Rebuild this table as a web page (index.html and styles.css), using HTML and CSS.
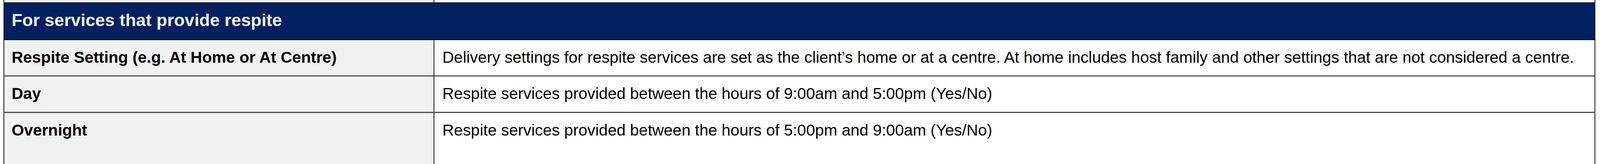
FILE: index.html
```html
<!DOCTYPE html>
<html lang="en">
<head>
<meta charset="utf-8">
<title>Respite services</title>
<link rel="stylesheet" href="styles.css">
</head>
<body>
<table class="grid">
  <colgroup>
    <col class="col-label">
    <col class="col-desc">
  </colgroup>
  <tbody>
    <tr class="stub">
      <td class="label"></td>
      <td class="desc"></td>
    </tr>
    <tr class="section">
      <td colspan="2">For services that provide respite</td>
    </tr>
    <tr class="row">
      <td class="label">Respite Setting (e.g. At Home or At Centre)</td>
      <td class="desc">Delivery settings for respite services are set as the client’s home or at a centre. At home includes host family and other settings that are not considered a centre.</td>
    </tr>
    <tr class="row">
      <td class="label">Day</td>
      <td class="desc">Respite services provided between the hours of 9:00am and 5:00pm (Yes/No)</td>
    </tr>
    <tr class="row row-last">
      <td class="label">Overnight</td>
      <td class="desc">Respite services provided between the hours of 5:00pm and 9:00am (Yes/No)</td>
    </tr>
  </tbody>
</table>
</body>
</html>
```

FILE: styles.css
```css
/* Sizes are expressed in vw so the sheet keeps the same proportions
   at any window width (1vw = 45.72px at the 4572px design width). */
html, body {
  margin: 0;
  padding: 0;
  background: #ffffff;
  overflow: hidden;
}

body {
  font-family: "Liberation Sans", Arial, sans-serif;
  color: #000000;
}

.grid {
  border-collapse: collapse;
  table-layout: fixed;
  margin-left: 0.2187vw;
  width: 99.49vw;
}

.col-label {
  width: 26.88vw;
}

.grid td {
  border: 2px solid #111111;
  padding: 0;
  text-align: left;
  vertical-align: top;
  overflow: hidden;
}

.stub td {
  border-top: none;
  height: 0.153vw;
  font-size: 0;
  line-height: 0;
}

.label {
  background: #f0f1f1;
  font-weight: bold;
}

.desc {
  background: #ffffff;
}

.section td {
  background: #002060;
  color: #f2f2f2;
  font-weight: bold;
  font-size: 1.0936vw;
  line-height: normal;
  padding: 0.4374vw 0.481vw 0.5906vw 0.4593vw;
}

.row td {
  font-size: 1vw;
  line-height: normal;
  padding: 0.503vw 0.481vw 0.5687vw 0.503vw;
}

.row td.label {
  padding-left: 0.4593vw;
}

.row-last td {
  border-top: 3px solid #4a4a4a;
  padding-bottom: 2vw;
}
```
